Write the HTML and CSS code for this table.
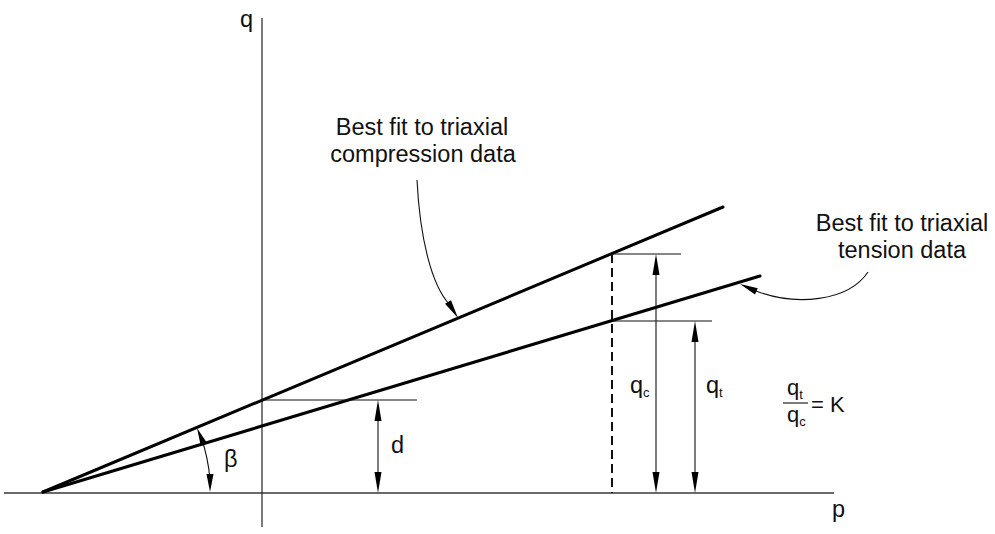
FILE: index.html
```html
<!DOCTYPE html>
<html>
<head>
<meta charset="utf-8">
<link rel="stylesheet" href="styles.css">
</head>
<body>
<svg class="diagram" width="995" height="534" viewBox="0 0 995 534" xmlns="http://www.w3.org/2000/svg">
  <!-- axes -->
  <line class="axis-p" x1="4" y1="493" x2="834" y2="493"/>
  <line class="axis-q" x1="262" y1="18" x2="262" y2="527"/>

  <!-- fit lines -->
  <line class="fit" x1="43" y1="492" x2="723" y2="207"/>
  <line class="fit" x1="43" y1="492" x2="760" y2="276"/>

  <!-- dashed line -->
  <line class="dash" x1="612" y1="254" x2="612" y2="493"/>

  <!-- horizontal extension lines -->
  <line class="thin" x1="262" y1="400" x2="417" y2="400"/>
  <line class="thin" x1="612" y1="254" x2="681" y2="254"/>
  <line class="thin" x1="612" y1="321" x2="712" y2="321"/>

  <!-- d dimension -->
  <line class="thin" x1="378" y1="410" x2="378" y2="483"/>
  <polygon class="head" points="378,400 374.5,421 381.5,421"/>
  <polygon class="head" points="378,493 374.5,472 381.5,472"/>

  <!-- qc dimension -->
  <line class="thin" x1="656" y1="264" x2="656" y2="483"/>
  <polygon class="head" points="656,254 652.5,275 659.5,275"/>
  <polygon class="head" points="656,493 652.5,472 659.5,472"/>

  <!-- qt dimension -->
  <line class="thin" x1="695" y1="331" x2="695" y2="483"/>
  <polygon class="head" points="695,321 691.5,342 698.5,342"/>
  <polygon class="head" points="695,493 691.5,472 698.5,472"/>

  <!-- beta arc -->
  <path class="thin-path" d="M201 437 A167 167 0 0 1 210 480"/>
  <polygon class="head" points="197,428 207.2,443.2 200.8,446"/>
  <polygon class="head" points="210,492 206.5,474 213.5,474"/>

  <!-- leader curves -->
  <path class="thin-path" d="M417 180 C420 240 432 285 449 304"/>
  <polygon class="head" points="458,318 451,300.2 445,303.8"/>
  <path class="thin-path" d="M868 272 C848 302 795 306 756 291"/>
  <polygon class="head" points="740,284 755,294.6 757.8,288.2"/>

  <!-- labels -->
  <text class="note" x="422" y="135" text-anchor="middle">Best fit to triaxial</text>
  <text class="note" x="423" y="162" text-anchor="middle">compression data</text>
  <text class="note" x="902" y="231" text-anchor="middle">Best fit to triaxial</text>
  <text class="note" x="902" y="258" text-anchor="middle">tension data</text>

  <text class="sym" x="240" y="27">q</text>
  <text class="sym" x="832" y="517">p</text>
  <text class="sym" x="391" y="453">d</text>
  <text class="sym" x="224" y="467">β</text>

  <text class="sym" x="630" y="393">q<tspan class="sub" dy="4">c</tspan></text>
  <text class="sym" x="706" y="393">q<tspan class="sub" dy="4">t</tspan></text>

  <text class="sym frac" x="787" y="395">q<tspan class="sub" dy="4">t</tspan></text>
  <line class="bar" x1="783" y1="403" x2="808" y2="403"/>
  <text class="sym frac" x="787" y="422">q<tspan class="sub" dy="4">c</tspan></text>
  <text class="sym frac" x="811" y="412">= K</text>
</svg>
</body>
</html>
```

FILE: styles.css
```css
html, body {
  margin: 0;
  padding: 0;
  background: #ffffff;
}

.diagram {
  display: block;
  font-family: "Liberation Sans", Arial, sans-serif;
}

.axis-p {
  stroke: #6a6a6a;
  stroke-width: 2;
}

.axis-q {
  stroke: #222;
  stroke-width: 1.2;
}

.fit {
  stroke: #000;
  stroke-width: 3;
  stroke-linecap: round;
}

.dash {
  stroke: #111;
  stroke-width: 2;
  stroke-dasharray: 9 5;
}

.thin {
  stroke: #111;
  stroke-width: 1.1;
}

.thin-path {
  fill: none;
  stroke: #111;
  stroke-width: 1.1;
}

.bar {
  stroke: #111;
  stroke-width: 1.1;
}

.head {
  fill: #000;
}

.note {
  font-size: 23.5px;
  fill: #111;
}

.sym {
  font-size: 23.5px;
  fill: #111;
}

.frac {
  font-size: 22px;
}

.sub {
  font-size: 13px;
}
```
